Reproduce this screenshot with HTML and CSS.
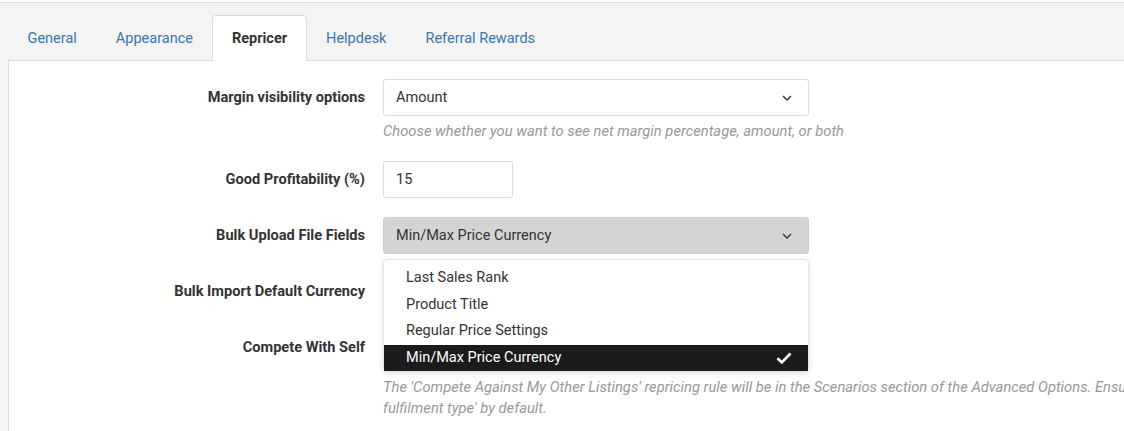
FILE: index.html
```html
<!DOCTYPE html>
<html>
<head>
<meta charset="utf-8">
<link rel="stylesheet" href="styles.css">
</head>
<body>
<div class="page">
  <nav class="tabs">
    <a class="tab">General</a>
    <a class="tab">Appearance</a>
    <a class="tab active">Repricer</a>
    <a class="tab">Helpdesk</a>
    <a class="tab">Referral Rewards</a>
  </nav>
  <div class="panel">
    <div class="group">
      <label class="label">Margin visibility options</label>
      <div class="control">
        <div class="select">
          <span>Amount</span>
          <svg class="chev" width="10" height="6" viewBox="0 0 10 6"><path d="M1 1l4 4 4-4" fill="none" stroke="#333" stroke-width="1.4"/></svg>
        </div>
        <p class="help">Choose whether you want to see net margin percentage, amount, or both</p>
      </div>
    </div>
    <div class="group">
      <label class="label">Good Profitability (%)</label>
      <div class="control">
        <div class="input short">15</div>
      </div>
    </div>
    <div class="group">
      <label class="label">Bulk Upload File Fields</label>
      <div class="control dd">
        <div class="select open">
          <span>Min/Max Price Currency</span>
          <svg class="chev" width="10" height="6" viewBox="0 0 10 6"><path d="M1 1l4 4 4-4" fill="none" stroke="#333" stroke-width="1.4"/></svg>
        </div>
        <ul class="menu">
          <li class="item">Last Sales Rank</li>
          <li class="item">Product Title</li>
          <li class="item">Regular Price Settings</li>
          <li class="item selected"><span>Min/Max Price Currency</span>
            <svg class="check" width="16" height="12" viewBox="0 0 16 12"><path d="M1.5 6.2l4.3 4.2L14.5 1.5" fill="none" stroke="#fff" stroke-width="2.6"/></svg>
          </li>
        </ul>
      </div>
    </div>
    <div class="group">
      <label class="label">Bulk Import Default Currency</label>
      <div class="control">
        <div class="select"><span>USD</span></div>
      </div>
    </div>
    <div class="group">
      <label class="label">Compete With Self</label>
      <div class="control wide">
        <div class="select"><span>No</span></div>
        <p class="help help-last">The 'Compete Against My Other Listings' repricing rule will be in the Scenarios section of the Advanced Options. Ensure it is set to 'same fulfilment type' by default.</p>
      </div>
    </div>
  </div>
</div>
</body>
</html>
```

FILE: styles.css
```css
html { background: #fff; }
body {
  margin: 0;
  font-family: Roboto, "Liberation Sans", sans-serif;
  font-size: 14px;
  color: #333;
  overflow: hidden;
  width: 1124px;
  height: 431px;
}
.page {
  margin-top: 2px;
  border-top: 1px solid #dcdcdc;
  background: #f4f4f4;
  width: 1500px;
}
.tabs {
  display: flex;
  padding: 12px 0 0 8px;
}
.tab {
  display: block;
  padding: 1px 18.5px 0;
  line-height: 44px;
  height: 43px;
  font-size: 14.5px;
  color: #3a77a9;
  border: 1px solid transparent;
  border-bottom: none;
}
.tab.active {
  background: #fff;
  color: #333;
  font-weight: bold;
  border-color: #dcdcdc;
  border-radius: 4px 4px 0 0;
  margin-bottom: -1px;
  height: 44px;
  position: relative;
  z-index: 1;
}
.panel {
  margin-left: 8px;
  background: #fff;
  border-top: 1px solid #dcdcdc;
  border-left: 1px solid #dcdcdc;
  padding-top: 18px;
  height: 400px;
}
.group {
  display: grid;
  grid-template-columns: 356px 426px;
  column-gap: 18px;
  margin-bottom: 19px;
}
.label {
  text-align: right;
  font-weight: bold;
  font-size: 14.6px;
  line-height: 37px;
  color: #333;
}
.control { position: relative; }
.select, .input {
  box-sizing: border-box;
  height: 37px;
  border: 1px solid #dedede;
  border-radius: 3px;
  background: #fff;
  display: flex;
  align-items: center;
  justify-content: space-between;
  padding: 0 16px 0 12px;
  font-size: 14.5px;
  color: #333;
}
.input.short { width: 130px; }
.select.open { background: #d4d4d4; border-color: #cfcfcf; }
.chev { display: block; }
.help {
  margin: 5px 0 0;
  line-height: 21px;
  font-style: italic;
  color: #999;
  font-size: 14.75px;
  white-space: nowrap;
}
.wide .help-last {
  white-space: normal;
  width: 900px;
  margin-top: 11px;
}
.menu {
  position: absolute;
  top: 42px;
  left: 0;
  right: 0;
  margin: 0;
  padding: 5px 0 0;
  list-style: none;
  background: #fff;
  border: 1px solid #e2e2e2;
  border-radius: 4px;
  box-shadow: 0 2px 6px rgba(0,0,0,0.12);
  z-index: 5;
}
.item {
  height: 26.6px;
  line-height: 26.6px;
  padding: 0 16px 0 22px;
  font-size: 14.5px;
  color: #333;
  display: flex;
  align-items: center;
  justify-content: space-between;
}
.item.selected {
  background: #1b1b1b;
  color: #fff;
}
.check { display: block; }
```
